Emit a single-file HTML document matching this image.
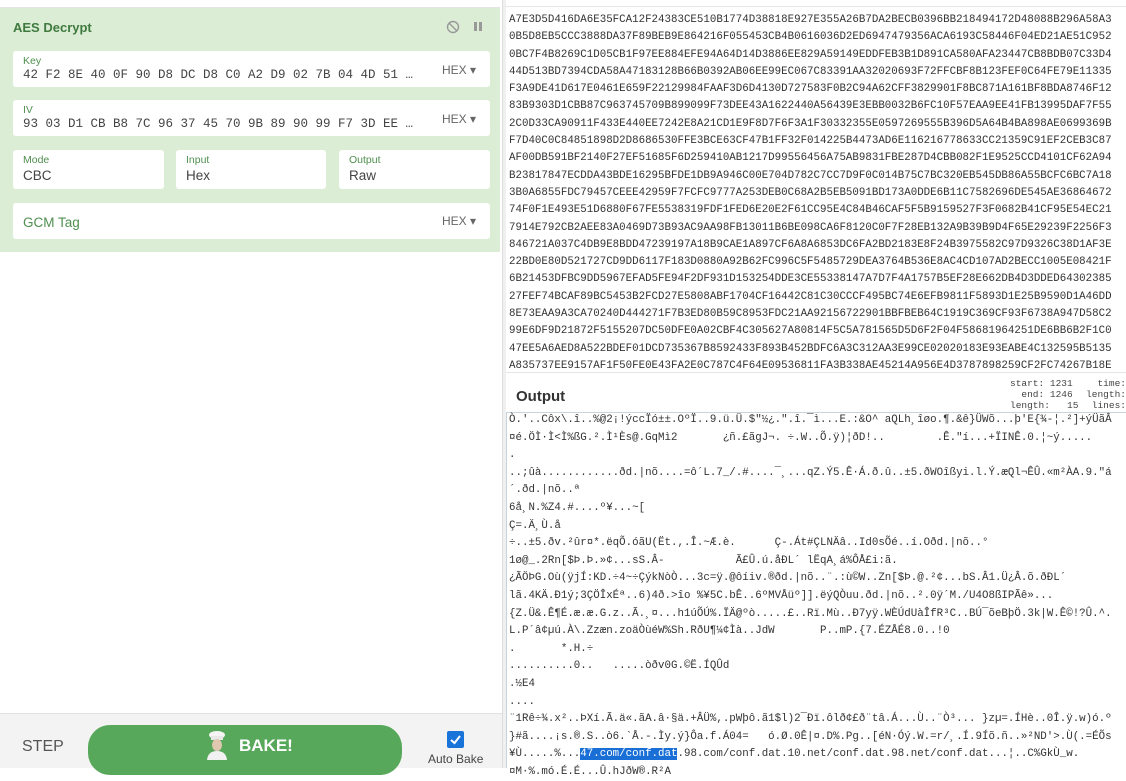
<!DOCTYPE html>
<html><head><meta charset="utf-8"><style>
*{margin:0;padding:0;box-sizing:border-box}
body{width:1126px;height:768px;overflow:hidden;background:#fff;font-family:"Liberation Sans",sans-serif;position:relative}
.abs{position:absolute}
.green{left:0;top:7px;width:500px;height:245px;background:#dcedd6;border-top:1px solid #e4e4e4}
.title{left:13px;top:20px;font-size:13px;font-weight:bold;color:#3f7a3f}
.box{position:absolute;background:#fff;border-radius:3px}
.lbl{position:absolute;left:10px;font-size:10.5px;color:#4f8f4f}
.val{position:absolute;left:10px;font-family:"Liberation Mono",monospace;font-size:12.5px;color:#444;white-space:nowrap}
.hex{position:absolute;right:14px;font-size:12px;color:#666}
.sv{position:absolute;left:10px;font-size:13.5px;color:#444}
.mono{font-family:"Liberation Mono",monospace;font-size:10.8px;color:#333;white-space:pre}
.in{left:509px;top:12px;line-height:17.3px}
.out{left:509px;top:412px;line-height:17.6px}
</style></head><body>
<div class="abs green"></div>
<div class="abs title">AES Decrypt</div>
<svg class="abs" style="left:446px;top:20px" width="14" height="14" viewBox="0 0 14 14"><circle cx="7" cy="7" r="5.5" fill="none" stroke="#999" stroke-width="1.4"/><line x1="3" y1="3" x2="11" y2="11" stroke="#999" stroke-width="1.4"/></svg>
<div class="abs" style="left:474px;top:22px;width:3px;height:9px;background:#999"></div>
<div class="abs" style="left:479px;top:22px;width:3px;height:9px;background:#999"></div>

<div class="box" style="left:13px;top:51px;width:477px;height:36px">
<div class="lbl" style="top:4px">Key</div>
<div class="val" style="top:17px">42 F2 8E 40 0F 90 D8 DC D8 C0 A2 D9 02 7B 04 4D 51 …</div>
<div class="hex" style="top:12px">HEX ▾</div></div>
<div class="box" style="left:13px;top:100px;width:477px;height:36px">
<div class="lbl" style="top:4px">IV</div>
<div class="val" style="top:17px">93 03 D1 CB B8 7C 96 37 45 70 9B 89 90 99 F7 3D EE …</div>
<div class="hex" style="top:12px">HEX ▾</div></div>
<div class="box" style="left:13px;top:150px;width:151px;height:39px"><div class="lbl" style="top:4px">Mode</div><div class="sv" style="top:18px">CBC</div></div>
<div class="box" style="left:176px;top:150px;width:150px;height:39px"><div class="lbl" style="top:4px">Input</div><div class="sv" style="top:18px">Hex</div></div>
<div class="box" style="left:339px;top:150px;width:151px;height:39px"><div class="lbl" style="top:4px">Output</div><div class="sv" style="top:18px">Raw</div></div>
<div class="box" style="left:13px;top:203px;width:477px;height:36px"><div class="sv" style="top:12px;color:#4f8f4f">GCM Tag</div><div class="hex" style="top:11px">HEX ▾</div></div>

<div class="abs" style="left:0;top:713px;width:502px;height:55px;background:#f3f3f3;border-top:1px solid #e2e2e2"></div>
<div class="abs" style="left:22px;top:738px;font-size:16px;color:#555">STEP</div>
<div class="abs" style="left:88px;top:725px;width:314px;height:50px;background:#57a85b;border-radius:22px"></div>
<svg class="abs" style="left:205px;top:730px" width="24" height="30" viewBox="0 0 24 30"><ellipse cx="12" cy="5" rx="8" ry="4" fill="#f4f4f4"/><rect x="6" y="6" width="12" height="4" fill="#e8e8e8"/><ellipse cx="12" cy="15" rx="5" ry="6" fill="#e0c8b0"/><path d="M2 30 Q3 21 12 21 Q21 21 22 30Z" fill="#f2f2f2"/></svg>
<div class="abs" style="left:239px;top:736px;font-size:17px;font-weight:bold;color:#fff">BAKE!</div>
<div class="abs" style="left:447px;top:731px;width:17px;height:17px;background:#1a73d9;border-radius:2px"></div>
<svg class="abs" style="left:447px;top:731px" width="17" height="17"><path d="M4 9 L7.5 12 L13 5" fill="none" stroke="#fff" stroke-width="2"/></svg>
<div class="abs" style="left:428px;top:752px;font-size:12px;color:#444">Auto Bake</div>

<div class="abs" style="left:502px;top:0;width:4px;height:768px;background:#f0f0f0;border-left:1px solid #ddd"></div>
<div class="abs" style="left:506px;top:0;width:620px;height:7px;border-bottom:1px solid #e6e6e6"></div>
<div class="abs mono in">A7E3D5D416DA6E35FCA12F24383CE510B1774D38818E927E355A26B7DA2BECB0396BB218494172D48088B296A58A3
0B5D8EB5CCC3888DA37F89BEB9E864216F055453CB4B0616036D2ED6947479356ACA6193C58446F04ED21AE51C952
0BC7F4B8269C1D05CB1F97EE884EFE94A64D14D3886EE829A59149EDDFEB3B1D891CA580AFA23447CB8BDB07C33D4
44D513BD7394CDA58A47183128B66B0392AB06EE99EC067C83391AA32020693F72FFCBF8B123FEF0C64FE79E11335
F3A9DE41D617E0461E659F22129984FAAF3D6D4130D727583F0B2C94A62CFF3829901F8BC871A161BF8BDA8746F12
83B9303D1CBB87C963745709B899099F73DEE43A1622440A56439E3EBB0032B6FC10F57EAA9EE41FB13995DAF7F55
2C0D33CA90911F433E440EE7242E8A21CD1E9F8D7F6F3A1F30332355E0597269555B396D5A64B4BA898AE0699369B
F7D40C0C84851898D2D8686530FFE3BCE63CF47B1FF32F014225B4473AD6E116216778633CC21359C91EF2CEB3C87
AF00DB591BF2140F27EF51685F6D259410AB1217D99556456A75AB9831FBE287D4CBB082F1E9525CCD4101CF62A94
B23817847ECDDA43BDE16295BFDE1DB9A946C00E704D782C7CC7D9F0C014B75C7BC320EB545DB86A55BCFC6BC7A18
3B0A6855FDC79457CEEE42959F7FCFC9777A253DEB0C68A2B5EB5091BD173A0DDE6B11C7582696DE545AE36864672
74F0F1E493E51D6880F67FE5538319FDF1FED6E20E2F61CC95E4C84B46CAF5F5B9159527F3F0682B41CF95E54EC21
7914E792CB2AEE83A0469D73B93AC9AA98FB13011B6BE098CA6F8120C0F7F28EB132A9B39B9D4F65E29239F2256F3
846721A037C4DB9E8BDD47239197A18B9CAE1A897CF6A8A6853DC6FA2BD2183E8F24B3975582C97D9326C38D1AF3E
22BD0E80D521727CD9DD6117F183D0880A92B62FC996C5F5485729DEA3764B536E8AC4CD107AD2BECC1005E08421F
6B21453DFBC9DD5967EFAD5FE94F2DF931D153254DDE3CE55338147A7D7F4A1757B5EF28E662DB4D3DDED64302385
27FEF74BCAF89BC5453B2FCD27E5808ABF1704CF16442C81C30CCCF495BC74E6EFB9811F5893D1E25B9590D1A46DD
8E73EAA9A3CA70240D444271F7B3ED80B59C8953FDC21AA92156722901BBFBEB64C1919C369CF93F6738A947D58C2
99E6DF9D21872F5155207DC50DFE0A02CBF4C305627A80814F5C5A781565D5D6F2F04F58681964251DE6BB6B2F1C0
47EE5A6AED8A522BDEF01DCD735367B8592433F893B452BDFC6A3C312AA3E99CE02020183E93EABE4C132595B5135
A835737EE9157AF1F50FE0E43FA2E0C787C4F64E09536811FA3B338AE45214A956E4D3787898259CF2FC74267B18E</div>
<div class="abs" style="left:506px;top:372px;width:620px;height:40px;background:#fff;border-top:1px solid #e6e6e6"></div>
<div class="abs" style="left:516px;top:388px;font-size:15px;font-weight:bold;color:#333">Output</div>
<div class="abs mono" style="left:1010px;top:378px;font-size:9.5px;line-height:11px;color:#444;text-align:right;width:60px">start: 1231
  end: 1246
length:   15</div>
<div class="abs mono" style="left:1080px;top:378px;font-size:9.5px;line-height:11px;color:#444;text-align:right;width:46px;overflow:hidden">  time:
length:
 lines:</div>
<div class="abs" style="left:506px;top:412px;width:620px;height:356px;border-left:1px solid #c9d3de;border-top:1px solid #c9d3de"></div>
<div class="abs mono out">Ò.'..Côx\.î..%@2¡!ýccÏó±±.OºÏ..9.ü.Ü.$"½¿.".î.¯ì...E.:&amp;O^ aQLh¸îøo.¶.&amp;ê}ÜWõ...þ'E{¾-¦.²]+ýÜãÂ
¤é.ÖÌ·Ì&lt;Ì%ßG.².Ì¹Ès@.GqMì2       ¿ñ.£ãgJ¬. ÷.W..Õ.ÿ)¦ðD!..        .Ê."í...+ÏINÊ.0.¦~ý.....
.
..;ûà............ðd.|nõ....=ô´L.7_/.#....¯¸...qZ.Ý5.Ê·Á.ð.û..±5.ðWOîßyi.l.Ý.æQl¬ÊÛ.«m²ÀA.9."á
´.ðd.|nõ..ª
6å¸N.%Z4.#....º¥...~[
Ç=.Ä¸Ù.å
÷..±5.ðv.²ûr¤*.ëqÕ.óãU(Ët.,.Î.~Æ.è.      Ç-.Át#ÇLNÄâ..Id0sÕé..í.Oðd.|nõ..°
1ø@_.2Rn[$Þ.Þ.»¢...sS.Â-           Ã£Û.ú.åÐL´ lËqA¸á%ÔÅ£i:ã.
¿ÃÖÞG.Où(ÿjÍ:KD.÷4~÷ÇýkNòÒ...3c=ÿ.@ôíiv.®ðd.|nõ..¨.:ù©W..Zn[$Þ.@.²¢...bS.Â1.Ü¿Â.õ.ðÐL´
lã.4KÄ.Ð1ý;3ÇÖÎxÉª..6)4ð.&gt;îo %¥5C.bÊ..6ºMVÅüº]].ëýQÒuu.ðd.|nõ..².0ÿ´M./U4O8ßIPÃê»...
{Z.Ü&amp;.Ê¶É.æ.æ.G.z..Ã.¸¤...h1úÕÚ%.ÏÄ@ºò.....£..Rï.Mù..Ð7yÿ.WÈÚdUàÎfR³C..BÚ¯õeBþÖ.3k|W.Ê©!?Û.^.
L.P´â¢µú.À\.Zzæn.zoäÒùéW%Sh.RðU¶¼¢Ìà..JdW       P..mP.{7.ÉZÅÉ8.0..!0
.       *.H.÷
..........0..   .....òðv0G.©Ë.ÍQÛd
.½E4
....
¨1Rê÷¾.x²..ÞXí.Ã.ä«.ãA.â·§ä.+ÂÜ%,.pWþô.ã1$l)2¯Ðï.ôlð¢£ð¨tâ.Á...Ù..¨Ò³... }zµ=.ÍHè..0Î.ÿ.w)ó.º
}#ã....¡s.®.S..ò6.`Å.-.Ìy.ý}Ôa.f.Á04=   ó.Ø.0Ê|¤.D%.Pg..[éN·Óý.W.=r/¸.Í.9Íõ.ñ..»²ND'&gt;.Ù(.=ÉÕs
¥Ù.....%...<span style="background:#1a6fd6;color:#fff">47.com/conf.dat</span>.98.com/conf.dat.10.net/conf.dat.98.net/conf.dat...¦..C%GkÙ_w.
¤M·%.mó.É.É...Û.hJðW®.R²A</div>
</body></html>
